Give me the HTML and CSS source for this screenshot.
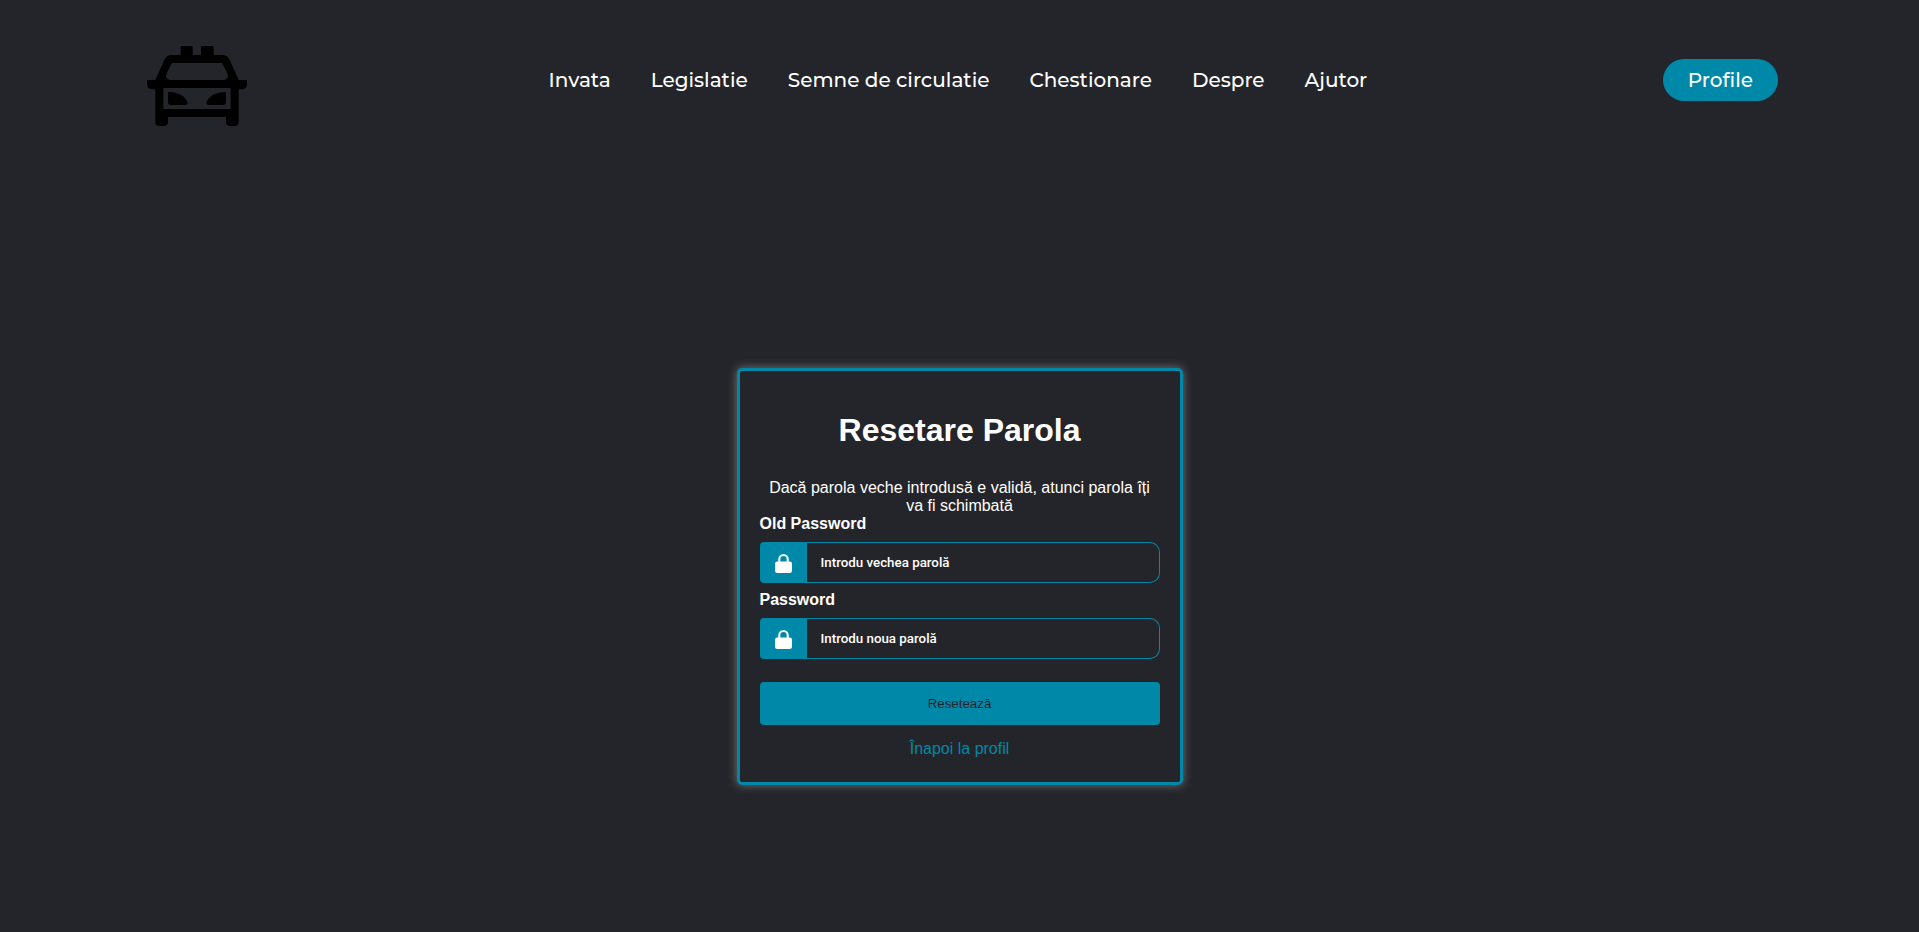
FILE: index.html
```html
<!DOCTYPE html>
<html lang="ro">
<head>
<meta charset="utf-8">
<title>Resetare Parola</title>
<link rel="stylesheet" href="styles.css">
</head>
<body>
<header class="header">
  <a class="logo" href="#" aria-label="Acasa">
    <svg class="logo-img" viewBox="12 -18 336 300" aria-hidden="true">
      <path fill-rule="evenodd" d="M131 57V34Q131 30 135 30H163Q167 30 167 34V57H192V34Q192 30 196 30H226Q230 30 230 34V57H256Q271 57 278 72L305 132H330V144Q330 160 313 160H305V257Q305 270 292 270H280Q267 270 267 257V243H93V257Q93 270 80 270H68Q55 270 55 257V160H47Q30 160 30 144V132H55L82 72Q89 57 104 57ZM105 81L89 112Q83 128 98 132H262Q277 128 271 112L255 81ZM79 156V219H281V156Z"/>
      <path d="M93 168Q140 169 152 200Q152 207 143 207H102Q93 207 93 198ZM267 168Q220 169 208 200Q208 207 217 207H258Q267 207 267 198Z"/>
    </svg>
  </a>
  <nav>
    <ul class="nav-links">
      <li><a href="#">Invata</a></li>
      <li><a href="#">Legislatie</a></li>
      <li><a href="#">Semne de circulatie</a></li>
      <li><a href="#">Chestionare</a></li>
      <li><a href="#">Despre</a></li>
      <li><a href="#">Ajutor</a></li>
    </ul>
  </nav>
  <button class="profile" type="button">Profile</button>
</header>
<main class="main">
  <form class="card">
    <h1>Resetare Parola</h1>
    <p>Dacă parola veche introdusă e validă, atunci parola îți va fi schimbată</p>
    <label for="old">Old Password</label>
    <div class="field">
      <span class="field-icon"><svg viewBox="0 0 16 18" aria-hidden="true"><path fill-rule="evenodd" d="M3 7V5A5 5 0 0 1 13 5V7H14Q16 7 16 9V16Q16 18 14 18H2Q0 18 0 16V9Q0 7 2 7ZM5 7H11V5A3 3 0 0 0 5 5Z"/></svg></span>
      <input id="old" type="password" placeholder="Introdu vechea parolă">
    </div>
    <label for="new">Password</label>
    <div class="field">
      <span class="field-icon"><svg viewBox="0 0 16 18" aria-hidden="true"><path fill-rule="evenodd" d="M3 7V5A5 5 0 0 1 13 5V7H14Q16 7 16 9V16Q16 18 14 18H2Q0 18 0 16V9Q0 7 2 7ZM5 7H11V5A3 3 0 0 0 5 5Z"/></svg></span>
      <input id="new" type="password" placeholder="Introdu noua parolă">
    </div>
    <button class="submit" type="submit">Resetează</button>
    <a class="back" href="#">Înapoi la profil</a>
  </form>
</main>
</body>
</html>
```
FILE: styles.css
```css
* {
  box-sizing: border-box;
  margin: 0;
  padding: 0;
}

body {
  display: flex;
  flex-direction: column;
  min-height: 100vh;
  background: #24252a;
  color: #fff;
  font: 16px/18px "Liberation Sans", Arial, sans-serif;
}

.header {
  display: flex;
  justify-content: space-between;
  align-items: center;
  padding: 30px 141px;
}

.logo-img {
  display: block;
  width: 112px;
  height: 100px;
}

.nav-links {
  display: flex;
  gap: 40px;
  list-style: none;
}

.nav-links a,
.profile {
  color: #fff;
  font: 500 20px/24px Montserrat, Inter, sans-serif;
  text-decoration: none;
}

.profile {
  padding: 9px 25px;
  border: 0;
  border-radius: 50px;
  background: #0088a9;
}

.main {
  flex: 1;
  display: flex;
  justify-content: center;
  align-items: center;
  padding-top: 60px;
}

.card {
  display: flex;
  flex-direction: column;
  width: 446px;
  padding: 20px;
  border: 3px solid #0088a9;
  border-radius: 5px;
  box-shadow: 0 0 10px #777;
}

h1 {
  margin: 20px 0 30px;
  font-size: 32px;
  line-height: 38px;
  text-align: center;
}

p {
  text-align: center;
}

label {
  font-weight: bold;
}

.field {
  display: flex;
  height: 41px;
  margin: 9px 0 8px;
}

.field-icon {
  display: flex;
  justify-content: center;
  align-items: center;
  width: 47px;
  padding-top: 2px;
  border-radius: 4px 0 0 4px;
  background: #0088a9;
}

.field-icon svg {
  width: 17px;
  height: 19px;
  fill: #fff;
}

.field input {
  flex: 1;
  min-width: 0;
  padding: 0 14px;
  border: 1px solid #0088a9;
  border-left: 0;
  border-radius: 0 10px 10px 0;
  background: transparent;
  color: #fff;
  font-family: Roboto, Arial, sans-serif;
  font-weight: 500;
}

.field input::placeholder {
  color: #fff;
}

.submit {
  height: 43px;
  margin: 15px 0;
  border: 0;
  border-radius: 4px;
  background: #0088a9;
  color: #24252a;
  font-family: "Liberation Sans", Arial, sans-serif;
}

.back {
  align-self: center;
  margin-bottom: 4px;
  color: #0088a9;
  text-decoration: none;
}
```
